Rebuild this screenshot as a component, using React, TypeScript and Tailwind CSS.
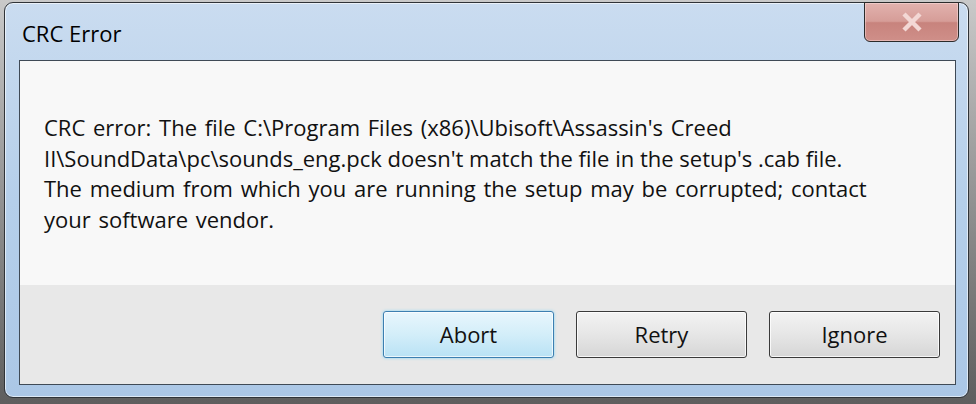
export default function App() {
  const font = { fontFamily: '"Open Sans", "Noto Sans", sans-serif' };
  return (
    <div className="w-[976px] h-[404px] bg-gradient-to-b from-[#c9c9c9] to-[#5e5e5e] pl-[4px] pt-[2px] overflow-hidden" style={font}>
      {/* Window frame */}
      <div className="w-[965px] h-[396px] rounded-[9px] border border-[#2f3338] bg-gradient-to-b from-[#cadcf0] via-[#b5cfea] to-[#abc7e6] flex flex-col shadow-[inset_0_0_0_1px_rgba(255,255,255,0.6)]">
        {/* Title bar */}
        <div className="h-[57px] flex items-start justify-between">
          <div className="pl-[17px] pt-[15px] text-[22px] leading-[30px] text-black">CRC Error</div>
          <div className="mr-[9px] -mt-px w-[95px] h-[40px] rounded-b-[6px] border border-[#2b2b2b] bg-[linear-gradient(to_bottom,#e2b2ae_0%,#d69d98_48%,#c8837d_52%,#cf8f89_100%)] flex items-center justify-center shadow-[inset_0_0_0_1px_rgba(255,230,230,0.45)]">
            <svg width="22" height="20" viewBox="0 0 22 20">
              <path d="M3 2 L19 18 M19 2 L3 18" stroke="#f3d8d5" strokeWidth="4.5" strokeLinecap="butt" />
            </svg>
          </div>
        </div>

        {/* Client area */}
        <div className="ml-[14px] mr-[12px] mb-[12px] flex-1 flex flex-col border border-[#3f4a56] bg-[#f8f8f8]">
          <div className="h-[224px] pl-[24px] pt-[51px] text-[22px] leading-[30.5px] text-[#111] [word-spacing:2px]">
            <p>CRC error: The file C:\Program Files (x86)\Ubisoft\Assassin's Creed</p>
            <p className="[word-spacing:0px]">II\SoundData\pc\sounds_eng.pck doesn't match the file in the setup's .cab file.</p>
            <p>The medium from which you are running the setup may be corrupted; contact</p>
            <p>your software vendor.</p>
          </div>
          <div className="flex-1 bg-[#e8e8e8] flex justify-end items-start gap-[22px] pt-[26px] pr-[15px]">
            <button className="w-[171px] h-[47px] rounded-[3px] border border-[#3c7fb1] bg-gradient-to-b from-[#e8f6fd] via-[#d3eef9] to-[#b9e2f5] text-[22px] text-[#111] shadow-[0_0_3px_#7fd3f5,inset_0_0_0_1px_rgba(255,255,255,0.7)]">
              Abort
            </button>
            <button className="w-[171px] h-[47px] rounded-[3px] border border-[#3a3a3a] bg-gradient-to-b from-[#f3f3f3] via-[#e6e6e6] to-[#d6d6d6] text-[22px] text-[#111] shadow-[inset_0_0_0_1px_rgba(255,255,255,0.8)]">
              Retry
            </button>
            <button className="w-[171px] h-[47px] rounded-[3px] border border-[#3a3a3a] bg-gradient-to-b from-[#f3f3f3] via-[#e6e6e6] to-[#d6d6d6] text-[22px] text-[#111] shadow-[inset_0_0_0_1px_rgba(255,255,255,0.8)]">
              Ignore
            </button>
          </div>
        </div>
      </div>
    </div>
  );
}
